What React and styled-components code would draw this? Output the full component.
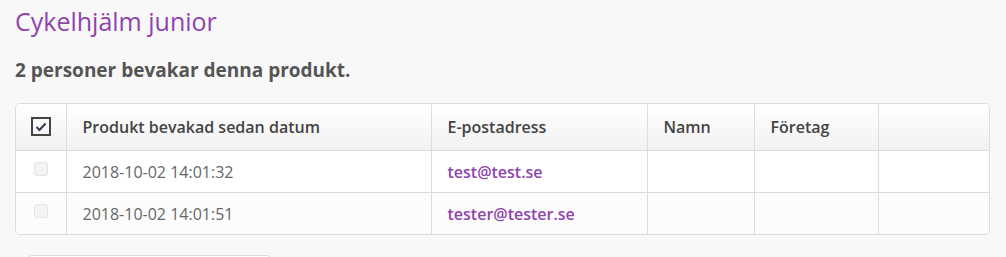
import React from "react"
import styled, { createGlobalStyle } from "styled-components"

const GlobalStyle = createGlobalStyle`
	body {
		margin: 0;
		background: #f8f8f8;
		font-family: "Open Sans", "Liberation Sans", sans-serif;
	}
`

const Page = styled.div`
	padding: 4px 16px 0 15px;
	width: 975px;
`
const Title = styled.h1`
	margin: 0;
	font-size: 25px;
	font-weight: 400;
	line-height: 34px;
	color: #8e44ad;
`
const Subtitle = styled.h3`
	margin: 19px 0 0;
	font-size: 19px;
	font-weight: 700;
	line-height: 26px;
	color: #555;
`
const TableWrap = styled.div`
	margin-top: 20px;
	border: 1px solid #ddd;
	border-radius: 5px;
	background: #fff;
	overflow: hidden;
`
const Table = styled.table`
	width: 100%;
	border-collapse: collapse;
	table-layout: fixed;
`
const Th = styled.th`
	height: 46px;
	padding: 0 16px;
	text-align: left;
	font-size: 16px;
	font-weight: 600;
	color: #444;
	background: linear-gradient(#fff, #f1f1f1);
	border-left: 1px solid #ddd;
	border-bottom: 1px solid #ddd;
	&:first-child {
		border-left: none;
		text-align: center;
		padding: 0;
	}
`
const Tr = styled.tr`
	background: ${(p) => (p.$odd ? "#fcfcfc" : "#fff")};
`
const Td = styled.td`
	height: 41px;
	padding: 0 16px;
	font-size: 16px;
	color: #666;
	border-left: 1px solid #ddd;
	border-top: 1px solid #ddd;
	&:first-child {
		border-left: none;
		text-align: center;
		padding: 0;
	}
`
const Email = styled.a`
	color: #8e44ad;
	font-weight: 600;
	text-decoration: none;
`
const HeadCheck = styled.span`
	display: inline-flex;
	align-items: center;
	justify-content: center;
	width: 16px;
	height: 15px;
	border: 2px solid #444;
	vertical-align: middle;
	margin-top: -4px;
`
const RowCheck = styled.span`
	display: inline-block;
	width: 12px;
	height: 12px;
	border: 1px solid #e4e4e4;
	border-radius: 3px;
	background: #f4f4f4;
	vertical-align: middle;
	margin-top: -8px;
`
const Button = styled.div`
	margin: 20px 0 0 12px;
	width: 243px;
	height: 30px;
	border: 1px solid #ddd;
	border-radius: 5px;
	background: #fff;
`

const rows = [
	{ date: "2018-10-02 14:01:32", email: "test@test.se" },
	{ date: "2018-10-02 14:01:51", email: "tester@tester.se" },
]

export default function App() {
	return (
		<Page>
			<GlobalStyle />
			<Title>Cykelhjälm junior</Title>
			<Subtitle>2 personer bevakar denna produkt.</Subtitle>
			<TableWrap>
				<Table>
					<colgroup>
						<col style={{ width: 50 }} />
						<col style={{ width: 365 }} />
						<col style={{ width: 216 }} />
						<col style={{ width: 107 }} />
						<col style={{ width: 124 }} />
						<col />
					</colgroup>
					<thead>
						<tr>
							<Th>
								<HeadCheck>
									<svg width="12" height="10" viewBox="0 0 12 10">
										<path d="M1.5 5 L4.5 8 L10.5 1.5" fill="none" stroke="#2c3e50" strokeWidth="2" />
									</svg>
								</HeadCheck>
							</Th>
							<Th>Produkt bevakad sedan datum</Th>
							<Th>E-postadress</Th>
							<Th>Namn</Th>
							<Th>Företag</Th>
							<Th />
						</tr>
					</thead>
					<tbody>
						{rows.map((r, i) => (
							<Tr key={r.email} $odd={i % 2 === 1}>
								<Td>
									<RowCheck />
								</Td>
								<Td>{r.date}</Td>
								<Td>
									<Email href="#">{r.email}</Email>
								</Td>
								<Td />
								<Td />
								<Td />
							</Tr>
						))}
					</tbody>
				</Table>
			</TableWrap>
			<Button />
		</Page>
	)
}
